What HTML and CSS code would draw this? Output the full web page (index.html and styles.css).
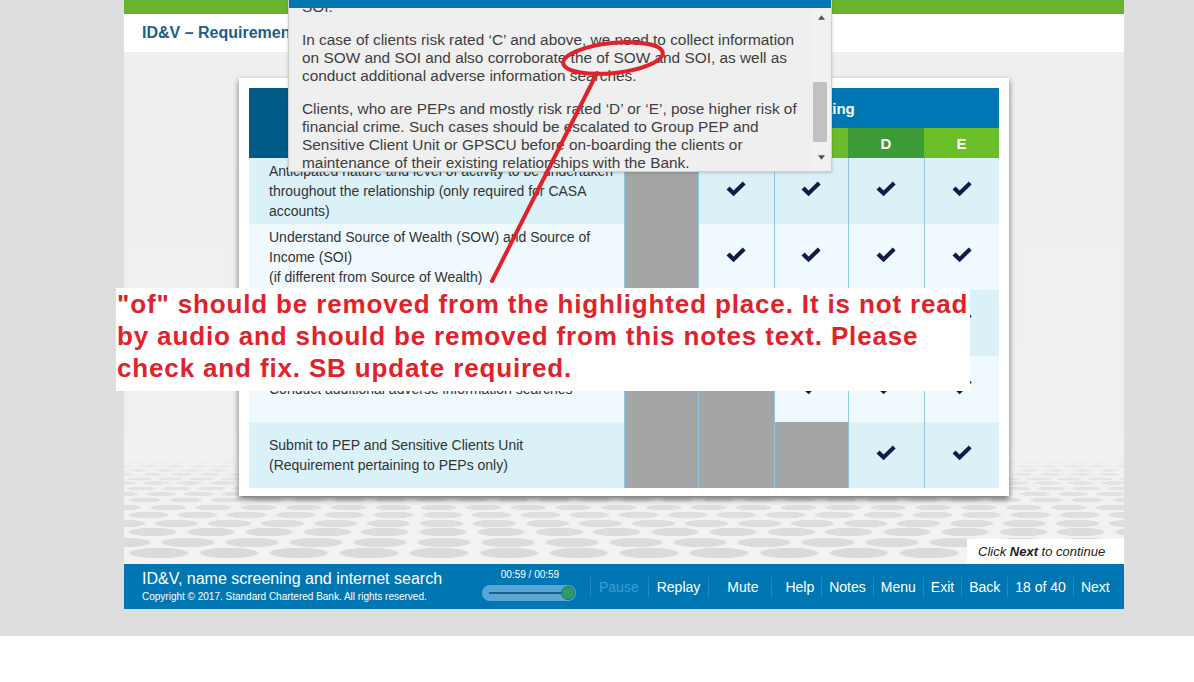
FILE: index.html
```html
<!DOCTYPE html>
<html lang="en">
<head>
<meta charset="utf-8">
<title>ID&amp;V – Requirements</title>
<link rel="stylesheet" href="styles.css">
</head>
<body>
<div class="screen">
  <div class="stage">
    <div class="topbar"></div>
    <div class="titlebar"><h1>ID&amp;V – Requirements based on client risk rating</h1></div>
    <div class="content">
      <div class="card">
        <table class="grid">
          <colgroup>
            <col class="c-text"><col class="c-a"><col class="c-b"><col class="c-c"><col class="c-d"><col class="c-e">
          </colgroup>
          <thead>
            <tr class="h1">
              <th rowspan="2" class="h-left"></th>
              <th colspan="5" class="h-rating">Risk Rating</th>
            </tr>
            <tr class="h2">
              <th class="g-light">A</th><th class="g-light">B</th><th class="g-light">C</th><th class="g-dark">D</th><th class="g-e">E</th>
            </tr>
          </thead>
          <tbody>
            <tr class="r-dark">
              <td class="txt">Anticipated nature and level of activity to be undertaken<br>throughout the relationship (only required for CASA<br>accounts)</td>
              <td class="na"></td>
              <td><svg class="tick" viewBox="0 0 20 16"><path d="M0.5 8.5 L3.6 5.6 L7.6 9.4 L16.8 0.6 L19.6 3.5 L7.6 15.2 Z"/></svg></td>
              <td><svg class="tick" viewBox="0 0 20 16"><path d="M0.5 8.5 L3.6 5.6 L7.6 9.4 L16.8 0.6 L19.6 3.5 L7.6 15.2 Z"/></svg></td>
              <td><svg class="tick" viewBox="0 0 20 16"><path d="M0.5 8.5 L3.6 5.6 L7.6 9.4 L16.8 0.6 L19.6 3.5 L7.6 15.2 Z"/></svg></td>
              <td><svg class="tick" viewBox="0 0 20 16"><path d="M0.5 8.5 L3.6 5.6 L7.6 9.4 L16.8 0.6 L19.6 3.5 L7.6 15.2 Z"/></svg></td>
            </tr>
            <tr class="r-light">
              <td class="txt">Understand Source of Wealth (SOW) and Source of<br>Income (SOI)<br>(if different from Source of Wealth)</td>
              <td class="na"></td>
              <td><svg class="tick" viewBox="0 0 20 16"><path d="M0.5 8.5 L3.6 5.6 L7.6 9.4 L16.8 0.6 L19.6 3.5 L7.6 15.2 Z"/></svg></td>
              <td><svg class="tick" viewBox="0 0 20 16"><path d="M0.5 8.5 L3.6 5.6 L7.6 9.4 L16.8 0.6 L19.6 3.5 L7.6 15.2 Z"/></svg></td>
              <td><svg class="tick" viewBox="0 0 20 16"><path d="M0.5 8.5 L3.6 5.6 L7.6 9.4 L16.8 0.6 L19.6 3.5 L7.6 15.2 Z"/></svg></td>
              <td><svg class="tick" viewBox="0 0 20 16"><path d="M0.5 8.5 L3.6 5.6 L7.6 9.4 L16.8 0.6 L19.6 3.5 L7.6 15.2 Z"/></svg></td>
            </tr>
            <tr class="r-dark">
              <td class="txt">Corroborate SOW and SOI</td>
              <td class="na"></td>
              <td class="na"></td>
              <td><svg class="tick" viewBox="0 0 20 16"><path d="M0.5 8.5 L3.6 5.6 L7.6 9.4 L16.8 0.6 L19.6 3.5 L7.6 15.2 Z"/></svg></td>
              <td><svg class="tick" viewBox="0 0 20 16"><path d="M0.5 8.5 L3.6 5.6 L7.6 9.4 L16.8 0.6 L19.6 3.5 L7.6 15.2 Z"/></svg></td>
              <td><svg class="tick" viewBox="0 0 20 16"><path d="M0.5 8.5 L3.6 5.6 L7.6 9.4 L16.8 0.6 L19.6 3.5 L7.6 15.2 Z"/></svg></td>
            </tr>
            <tr class="r-light">
              <td class="txt">Conduct additional adverse information searches</td>
              <td class="na"></td>
              <td class="na"></td>
              <td><svg class="tick" viewBox="0 0 20 16"><path d="M0.5 8.5 L3.6 5.6 L7.6 9.4 L16.8 0.6 L19.6 3.5 L7.6 15.2 Z"/></svg></td>
              <td><svg class="tick" viewBox="0 0 20 16"><path d="M0.5 8.5 L3.6 5.6 L7.6 9.4 L16.8 0.6 L19.6 3.5 L7.6 15.2 Z"/></svg></td>
              <td><svg class="tick" viewBox="0 0 20 16"><path d="M0.5 8.5 L3.6 5.6 L7.6 9.4 L16.8 0.6 L19.6 3.5 L7.6 15.2 Z"/></svg></td>
            </tr>
            <tr class="r-dark">
              <td class="txt">Submit to PEP and Sensitive Clients Unit<br>(Requirement pertaining to PEPs only)</td>
              <td class="na"></td>
              <td class="na"></td>
              <td class="na"></td>
              <td><svg class="tick" viewBox="0 0 20 16"><path d="M0.5 8.5 L3.6 5.6 L7.6 9.4 L16.8 0.6 L19.6 3.5 L7.6 15.2 Z"/></svg></td>
              <td><svg class="tick" viewBox="0 0 20 16"><path d="M0.5 8.5 L3.6 5.6 L7.6 9.4 L16.8 0.6 L19.6 3.5 L7.6 15.2 Z"/></svg></td>
            </tr>
          </tbody>
        </table>
      </div>
      <div class="click-next">Click <b>Next</b> to continue</div>
    </div>
    <div class="footer">
      <div class="footer-info">
        <div class="course">ID&amp;V, name screening and internet search</div>
        <div class="copyright">Copyright © 2017. Standard Chartered Bank. All rights reserved.</div>
      </div>
      <div class="media">
        <div class="time">00:59 / 00:59</div>
        <div class="slider"><div class="slider-line"></div><div class="knob"></div></div>
      </div>
      <div class="nav">
        <span class="nav-item dim p-pause">Pause</span>
        <span class="nav-item p-replay">Replay</span>
        <span class="nav-item p-mute">Mute</span>
        <span class="nav-item p-help">Help</span>
        <span class="nav-item">Notes</span>
        <span class="nav-item">Menu</span>
        <span class="nav-item">Exit</span>
        <span class="nav-item">Back</span>
        <span class="nav-item">18 of 40</span>
        <span class="nav-item">Next</span>
      </div>
    </div>

    <div class="notes">
      <div class="notes-bar"></div>
      <div class="notes-body">
        <div class="notes-text">
          <p class="first">For clients risk rated ‘B’, we need to understand the SOW and<br>SOI.</p>
          <p>In case of clients risk rated ‘C’ and above, we need to collect information<br>on SOW and SOI and also corroborate the of SOW and SOI, as well as<br>conduct additional adverse information searches.</p>
          <p>Clients, who are PEPs and mostly risk rated ‘D’ or ‘E’, pose higher risk of<br>financial crime. Such cases should be escalated to Group PEP and<br>Sensitive Client Unit or GPSCU before on-boarding the clients or<br>maintenance of their existing relationships with the Bank.</p>
        </div>
        <div class="scrollbar">
          <div class="sb-btn"><svg viewBox="0 0 8 5" class="sb-arrow"><path d="M0 5 L4 0 L8 5 Z"/></svg></div>
          <div class="sb-track"><div class="sb-thumb"></div></div>
          <div class="sb-btn sb-down"><svg viewBox="0 0 8 5" class="sb-arrow"><path d="M0 0 L8 0 L4 5 Z"/></svg></div>
        </div>
      </div>
    </div>
  </div>
</div>

<div class="annotation">"of" should be removed from the highlighted place. It is not read<br>by audio and should be removed from this notes text. Please<br>check and fix. SB update required.</div>

<svg class="markup" viewBox="0 0 1194 682" width="1194" height="682">
  <ellipse cx="613" cy="58" rx="50" ry="15" transform="rotate(-6 613 58)" fill="none" stroke="#e1222b" stroke-width="4"/>
  <line x1="597" y1="73" x2="492" y2="281" stroke="#e1222b" stroke-width="4" stroke-linecap="round"/>
</svg>
</body>
</html>
```

FILE: styles.css
```css
* { box-sizing: border-box; }

body {
  margin: 0;
  width: 1194px;
  height: 682px;
  overflow: hidden;
  position: relative;
  background: #ffffff;
  font-family: "Liberation Sans", Arial, sans-serif;
}

.screen {
  height: 636px;
  background: #dedede;
}

.stage {
  position: relative;
  width: 1000px;
  height: 609px;
  margin-left: 124px;
  display: flex;
  flex-direction: column;
}

.topbar {
  height: 14px;
  background: #6ab42d;
}

.titlebar {
  height: 38px;
  background: #ffffff;
  padding-left: 18px;
  display: flex;
  align-items: center;
}

.titlebar h1 {
  margin: 0;
  font-size: 16px;
  font-weight: bold;
  color: #1e5d89;
  white-space: nowrap;
}

.content {
  flex: 1;
  position: relative;
  padding: 26px 0 0 115px;
  background:
    radial-gradient(ellipse 31px 5.5px at 50% 50%, #dadada 88%, rgba(218,218,218,0) 100%) 0 495px / 70px 12px repeat-x,
    radial-gradient(ellipse 28px 5px at 50% 50%, #dbdbdb 88%, rgba(219,219,219,0) 100%) 32px 485px / 64px 11px repeat-x,
    radial-gradient(ellipse 25px 4.5px at 50% 50%, #dcdcdc 88%, rgba(220,220,220,0) 100%) 0 475px / 58px 10px repeat-x,
    radial-gradient(ellipse 23px 4px at 50% 50%, #dddddd 88%, rgba(221,221,221,0) 100%) 26px 467px / 53px 9px repeat-x,
    radial-gradient(ellipse 21px 3.5px at 50% 50%, #dedede 88%, rgba(222,222,222,0) 100%) 0 459px / 49px 8px repeat-x,
    radial-gradient(ellipse 19px 3px at 50% 50%, #dfdfdf 88%, rgba(223,223,223,0) 100%) 22px 452px / 45px 7px repeat-x,
    radial-gradient(ellipse 17px 2.6px at 50% 50%, #e0e0e0 88%, rgba(224,224,224,0) 100%) 0 445px / 41px 6px repeat-x,
    radial-gradient(ellipse 16px 2.3px at 50% 50%, #e1e1e1 88%, rgba(225,225,225,0) 100%) 18px 439px / 38px 6px repeat-x,
    radial-gradient(ellipse 15px 2px at 50% 50%, #e2e2e2 88%, rgba(226,226,226,0) 100%) 0 434px / 35px 5px repeat-x,
    radial-gradient(ellipse 14px 1.8px at 50% 50%, #e3e3e3 88%, rgba(227,227,227,0) 100%) 16px 429px / 33px 4px repeat-x,
    radial-gradient(ellipse 13px 1.6px at 50% 50%, #e4e4e4 88%, rgba(228,228,228,0) 100%) 0 425px / 31px 4px repeat-x,
    radial-gradient(ellipse 12px 1.4px at 50% 50%, #e6e6e6 88%, rgba(230,230,230,0) 100%) 14px 421px / 29px 3px repeat-x,
    radial-gradient(ellipse 11px 1.2px at 50% 50%, #e7e7e7 88%, rgba(231,231,231,0) 100%) 0 417px / 27px 3px repeat-x,
    radial-gradient(ellipse 10px 1.1px at 50% 50%, #e8e8e8 88%, rgba(232,232,232,0) 100%) 12px 413px / 25px 3px repeat-x,
    radial-gradient(ellipse 9px 1px at 50% 50%, #e9e9e9 88%, rgba(233,233,233,0) 100%) 0 409px / 23px 3px repeat-x,
    linear-gradient(#efefef 0, #f0f0f0 380px, #f3f3f3 512px);
}

.card {
  width: 770px;
  height: 418px;
  padding: 10px;
  background: #ffffff;
  box-shadow: 0 3px 6px rgba(0, 0, 0, 0.55);
}

.grid {
  width: 750px;
  border-collapse: collapse;
  table-layout: fixed;
}

.c-text { width: 375px; }
.c-a { width: 74px; }
.c-b { width: 76px; }
.c-c { width: 74px; }
.c-d { width: 76px; }
.c-e { width: 75px; }

.grid th {
  padding: 0;
  color: #ffffff;
  font-weight: bold;
  font-size: 15px;
  text-align: center;
}

.h1 { height: 40px; }
.h2 { height: 30px; }

.h-left { background: #005a87; }
.grid th.h-rating { background: #0077b5; padding-left: 4px; }
.g-light { background: #6cbb2d; }
.g-dark { background: #3d9b37; }
.g-e { background: #6abf2b; }

.grid tbody tr { height: 66px; }

.r-dark td { background: #daf1f8; }
.r-light td { background: #f0f9fd; }

.grid td {
  padding: 0;
  text-align: center;
  vertical-align: middle;
  border-left: 1px solid #8fc6de;
}

.grid td.txt {
  border-left: 0;
  text-align: left;
  padding: 0 8px 0 20px;
  font-size: 14px;
  line-height: 20px;
  color: #333333;
  white-space: nowrap;
}

.grid td.na { background: #a5a5a5; }

.tick {
  display: block;
  width: 20px;
  height: 16px;
  margin: -4px auto 0;
  fill: #0f1c4a;
}

.click-next {
  position: absolute;
  right: 0;
  bottom: 0;
  width: 157px;
  height: 25px;
  padding-left: 11px;
  background: #ffffff;
  font-size: 13px;
  font-style: italic;
  line-height: 25px;
  color: #222222;
  white-space: nowrap;
}

.footer {
  height: 45px;
  background: #0077b3;
  display: flex;
  color: #ffffff;
}

.footer-info {
  width: 358px;
  padding: 6px 0 0 18px;
  white-space: nowrap;
}

.course {
  font-size: 16px;
  line-height: 18px;
}

.copyright {
  font-size: 10px;
  line-height: 12px;
  margin-top: 3px;
}

.media {
  width: 94px;
  padding-top: 5px;
}

.time {
  font-size: 10px;
  line-height: 12px;
  text-align: center;
  padding-left: 2px;
}

.slider {
  position: relative;
  height: 16px;
  margin-top: 4px;
  border-radius: 8px;
  background: #5aa6d7;
  display: flex;
  align-items: center;
  padding: 0 7px;
}

.slider-line {
  flex: 1;
  height: 2px;
  background: #1d5f8c;
}

.knob {
  position: absolute;
  right: 1px;
  top: 1px;
  width: 14px;
  height: 14px;
  border-radius: 50%;
  background: #2e9b6c;
  border: 1px solid #1f6f52;
}

.nav {
  display: flex;
  align-items: center;
  margin-left: 14px;
  font-size: 14px;
  white-space: nowrap;
}

.nav-item {
  line-height: 20px;
  padding: 0 7px;
  border-left: 1px solid rgba(255, 255, 255, 0.14);
}

.nav-item.dim { color: #3e9bd3; }
.p-pause { padding: 0 9px 0 8px; }
.p-replay { padding: 0 8px 0 8px; }
.p-mute { padding: 0 13px 0 18px; }
.p-help { padding: 0 7px 0 13px; }

.notes {
  position: absolute;
  left: 164px;
  top: 0;
  width: 544px;
  height: 172px;
  background: #efefef;
  border: 1px solid #d0d0d0;
  border-top: 0;
  box-shadow: 0 1px 3px rgba(0, 0, 0, 0.18);
  display: flex;
  flex-direction: column;
}

.notes-bar {
  height: 8px;
  background: #0077b3;
  flex: none;
}

.notes-body {
  flex: 1;
  display: flex;
  overflow: hidden;
}

.notes-text {
  flex: 1;
  padding-left: 13px;
  font-size: 15.4px;
  line-height: 18px;
  color: #3e3e3e;
  white-space: nowrap;
  overflow: hidden;
}

.notes-text p { margin: 0 0 15px; }
.notes-text p.first { margin-top: -28px; }

.scrollbar {
  width: 19px;
  flex: none;
  display: flex;
  flex-direction: column;
  background: #f1f1f1;
}

.sb-btn {
  height: 18px;
  display: flex;
  align-items: center;
  justify-content: center;
}

.sb-down { margin-bottom: 5px; }

.sb-arrow {
  width: 7px;
  height: 5px;
  fill: #505050;
}

.sb-track {
  flex: 1;
  padding: 56px 0 0 1px;
}

.sb-thumb {
  width: 14px;
  height: 60px;
  background: #c1c1c1;
}

.annotation {
  position: absolute;
  left: 116px;
  top: 288px;
  width: 854px;
  height: 103px;
  background: #ffffff;
  padding-left: 1px;
  color: #e1222b;
  font-size: 26px;
  letter-spacing: 0.85px;
  font-weight: bold;
  line-height: 32px;
  white-space: nowrap;
  overflow: hidden;
}

.markup {
  position: absolute;
  left: 0;
  top: 0;
  pointer-events: none;
}
```
